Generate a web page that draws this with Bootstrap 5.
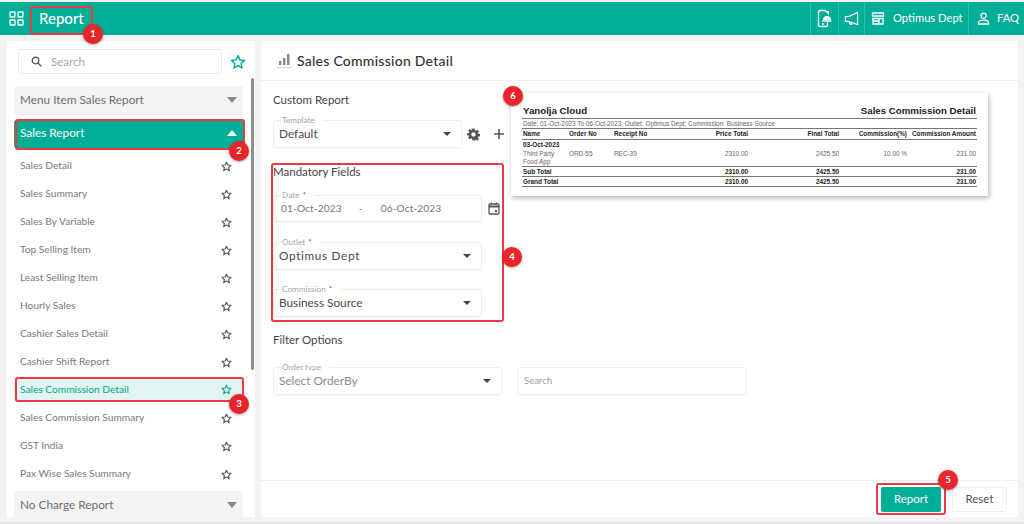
<!DOCTYPE html>
<html lang="en"><head><meta charset="utf-8"><title>Report</title>
<link href="https://cdn.jsdelivr.net/npm/bootstrap@5.3.0/dist/css/bootstrap.min.css" rel="stylesheet">
<style>
html,body{height:524px;overflow:hidden}
body{background:#f3f3f3;font-family:"Lato","Open Sans",sans-serif;color:#3c4043;position:relative}
.topbar{height:33px;margin-top:2px;background:#00ae98;color:#fff}
.topcell{height:100%;display:flex;align-items:center;border-left:1px solid #2fc0ad;gap:8px;font-size:11.2px;padding:0 0 0 6px;white-space:nowrap;flex:none}
.cell-a{width:28px}
.cell-b{width:26px;padding-left:5px}
.cell-c{width:104px}
.cell-d{width:56px;padding-left:8px;gap:7px}
.gridico{margin-left:9px}
.apptitle{font-size:15px;font-weight:500;margin-left:15px}
.shell{height:483px;padding:6px 6px 0 7px;gap:6px}
.sidepane{width:248px;height:476px;background:#fff;position:relative;overflow:hidden;flex:none}
.mainpane{flex:1;height:476px;background:#fff;display:flex;flex-direction:column}
.searchbox{width:204px;height:25px;margin-left:11px;border:1px solid #eaeaea;border-radius:3px;font-size:11.5px;color:#a8a8a8;padding-left:12px;gap:9px}
.searchrow{margin-top:8px;gap:8px}
.acc{width:229px;margin-left:7px;height:29px;border-radius:3px;background:#f3f3f3;color:#6f6f6f;font-size:11.8px;padding:0 6px 2px}
.acc.open{background:#00ae98;color:#fff;margin-top:5px;height:28px}
.firstacc{margin-top:12px}
.caret-d{width:0;height:0;border-left:5.5px solid transparent;border-right:5.5px solid transparent;border-top:6px solid #8a8a8a}
.caret-u{width:0;height:0;border-left:5.5px solid transparent;border-right:5.5px solid transparent;border-bottom:6px solid #fff}
.itemrow{width:229px;margin-left:7px;height:28px;font-size:10.2px;color:#7a7a7a;padding:0 11px 0 6px}
.itemrow.sel{background:#e0f4f1;color:#00a894;height:25px;margin:1px 0 2px 7px}
.itemlist{margin-top:4px;margin-bottom:3px}
.stro{fill:none;stroke:#555;stroke-width:2.4;stroke-linejoin:round}
.itemrow.sel .stro{stroke:#00a894}
.scrolly{position:absolute;left:244px;top:37px;width:3px;height:292px;background:#8f8f8f;border-radius:2px}
.mainhead{height:40px;border-bottom:1px solid #eee;font-size:14px;font-weight:500;color:#333;padding-left:15px;gap:4px;flex:none;letter-spacing:.25px}
.mainbody{flex:1;padding-left:12px;position:relative;overflow:hidden}
.sect{font-size:11.5px;color:#444;line-height:14px}
.fld{border:1px solid #eee;border-radius:3px;position:relative;font-size:11.8px;color:#4a4a4a;padding:0 5px;display:flex;align-items:center;justify-content:space-between;box-shadow:0 1px 1px rgba(0,0,0,.03)}
.fldlabel{position:absolute;left:7px;top:-6px;background:#fff;padding:0 8px 0 1px;font-size:8.2px;line-height:10px;color:#a5a5a5}
.req{color:#e33;margin-left:3px}
.ctr{width:0;height:0;border-left:4px solid transparent;border-right:4px solid transparent;border-top:4px solid #444;margin-right:5px}
.tplrow{margin-top:13px;width:240px;gap:5px}
.tplfld{width:189px;height:28px}
.sect-mand{margin-top:17px}
.datefld{width:209px;height:27px;color:#777;padding:0 0 0 7px;justify-content:flex-start;font-size:10.2px;letter-spacing:.1px}
.daterow{margin-top:16px;width:228px;gap:6px}
.dash{margin:0 18px 0 17px}
.sel209{width:209px;height:28px;margin-top:20px}
.sel209b{margin-top:19px}
.spaced{letter-spacing:.65px}
.sect-filt{margin-top:16px}
.filtrow{margin-top:20px;gap:15px}
.ordfld{width:229px;height:28px;color:#8a8a8a;padding-bottom:1px}
.srchfld{width:230px;height:28px;font-size:9.5px;color:#a0a0a0;padding:0 6px}
.bodypad{padding-top:12px}
.plusico{margin-left:8px}
.mainfoot{height:37px;border-top:1px solid #eee;padding-right:11px;gap:11px;flex:none}
.btn-go,.btn-go:hover{background:#00ae98;color:#fff;font-size:11.5px;width:60px;height:25px;padding:0;border:0;border-radius:2px}
.btn-rs{background:#fff;color:#555;font-size:11.5px;width:55px;height:25px;padding:0;border:1px solid #eee;border-radius:2px}
.repwrap{position:absolute;left:250px;top:12px;width:477px;height:103px;background:#fff;box-shadow:1px 2px 5px rgba(0,0,0,.3);padding:12px 11px 0;font-family:"Liberation Sans",Arial,sans-serif}
.rephead{font-weight:700;font-size:9.7px;color:#222;line-height:12px;padding:0 1px 1px;border-bottom:1px solid #777}
.repsub{font-size:6.4px;color:#666;line-height:9px;padding:0 1px;border-bottom:1px solid #777}
.reptab{width:455px;table-layout:fixed;border-collapse:collapse;font-size:6.4px;color:#666;line-height:7.5px}
.reptab td,.reptab th{padding:0 1px;vertical-align:middle;white-space:nowrap}
.reptab td.wrp{white-space:normal}
.reptab th,.reptab .bd{color:#222;font-weight:700}
.r1 th{height:10px;border-bottom:1px solid #777}
.r2 td{height:10px}
.r3 td{padding-bottom:1px;padding-top:1px;vertical-align:top}
.r4 td{height:10px;border-top:1px solid #777}
.r5 td{height:10px;border-top:1px solid #777;border-bottom:1px solid #777}
.rt{text-align:right}
.mark-box{position:absolute;border:2px solid #ec3a44;border-radius:3px;pointer-events:none}
.mark-num{position:absolute;width:20px;height:20px;border-radius:50%;background:#e7262c;color:#fff;font-size:9.5px;font-weight:700;display:flex;align-items:center;justify-content:center;box-shadow:0 1px 3px rgba(0,0,0,.35)}
.b1{left:30px;top:6px;width:63px;height:29px}.n1{left:83px;top:24px}
.b2{left:15px;top:119px;width:230px;height:31px}.n2{left:229px;top:141px}
.b3{left:15px;top:377px;width:229px;height:25px}.n3{left:229px;top:394px}
.b4{left:271px;top:163px;width:233px;height:159px}.n4{left:502px;top:247px}
.b5{left:876px;top:483px;width:70px;height:32px}.n5{left:938px;top:470px}
.n6{left:503px;top:86px}
.basestrip{position:absolute;left:0;right:0;bottom:0;height:2px;background:#e4e4e4}
</style></head><body>
<svg width="0" height="0" class="position-absolute"><defs><symbol id="star" viewBox="0 0 24 24"><path class="stro" d="M12 2.500l2.900 6.300 6.900.8-5.100 4.700 1.400 6.800L12 17.200l-6.100 3.900 1.400-6.800L2.200 9.600l6.900-.8z"/></symbol></defs></svg>
<div class="topbar d-flex align-items-center">
  <svg class="gridico" width="15" height="15" viewBox="0 0 15 15" fill="none" stroke="#fff" stroke-width="1.3"><rect x="1" y="1" width="5" height="5" rx=".6"/><rect x="9" y="1" width="5" height="5" rx=".6"/><rect x="1" y="9" width="5" height="5" rx=".6"/><rect x="9" y="9" width="5" height="5" rx=".6"/></svg>
  <div class="apptitle flex-grow-1">Report</div>
  <div class="topcell cell-a"><svg width="15" height="19" viewBox="0 0 15 19" fill="none" stroke="#fff" stroke-width="1.4"><path d="M9 1.500H3a1.500 1.500 0 0 0-1.500 1.500v13A1.500 1.500 0 0 0 3 17.500h6a1.500 1.500 0 0 0 1.500-1.500v-3"/><path d="M5 15h2"/><path d="M6 11a4 4 0 0 1 8 0z" fill="#fff" stroke="none"/><path d="M5 12h9.500"/><path d="M8 2h4v4z" fill="#fff" stroke="none"/></svg></div>
  <div class="topcell cell-b"><svg width="15" height="15" viewBox="0 0 16 15" fill="none" stroke="#fff" stroke-width="1.2"><path d="M14.500 1v13L5 10.500H1.500v-5H5z"/><path d="M5 10.500l1.500 3h2l-1-2.400"/></svg></div>
  <div class="topcell cell-c"><svg width="14" height="13" viewBox="0 0 14 13" fill="none" stroke="#fff" stroke-width="1.3"><path d="M1.500 1h11v3h-11zM1 6.500h12M2 6.500V12h10V6.500M2 9h6M8 6.500V12"/></svg><span>Optimus Dept</span></div>
  <div class="topcell cell-d"><svg width="13" height="13" viewBox="0 0 13 13" fill="none" stroke="#fff" stroke-width="1.3"><circle cx="6.500" cy="3.800" r="2.600"/><path d="M1.500 12v-1.200c0-1.600 2-2.600 5-2.600s5 1 5 2.600V12z"/></svg><span>FAQ</span></div>
</div>
<div class="shell d-flex">
  <aside class="sidepane">
    <div class="searchrow d-flex align-items-center">
      <div class="searchbox d-flex align-items-center"><svg width="11" height="11" viewBox="0 0 11 11" fill="none" stroke="#555" stroke-width="1.3"><circle cx="4.500" cy="4.500" r="3.300"/><path d="M7 7l3.200 3.200"/></svg><span>Search</span></div>
      <svg width="16" height="16" viewBox="0 0 24 24" fill="none" stroke="#00ae98" stroke-width="2.2" stroke-linejoin="round"><path d="M12 2.500l2.900 6.300 6.900.8-5.100 4.700 1.400 6.800L12 17.200l-6.100 3.900 1.400-6.800L2.200 9.600l6.900-.8z"/></svg>
    </div>
    <div class="acc firstacc d-flex align-items-center justify-content-between"><span>Menu Item Sales Report</span><i class="caret-d"></i></div>
    <div class="acc open d-flex align-items-center justify-content-between"><span>Sales Report</span><i class="caret-u"></i></div>
    <div class="itemlist">
      <div class="itemrow d-flex align-items-center justify-content-between"><span>Sales Detail</span><svg width="11" height="11"><use href="#star"/></svg></div>
      <div class="itemrow d-flex align-items-center justify-content-between"><span>Sales Summary</span><svg width="11" height="11"><use href="#star"/></svg></div>
      <div class="itemrow d-flex align-items-center justify-content-between"><span>Sales By Variable</span><svg width="11" height="11"><use href="#star"/></svg></div>
      <div class="itemrow d-flex align-items-center justify-content-between"><span>Top Selling Item</span><svg width="11" height="11"><use href="#star"/></svg></div>
      <div class="itemrow d-flex align-items-center justify-content-between"><span>Least Selling Item</span><svg width="11" height="11"><use href="#star"/></svg></div>
      <div class="itemrow d-flex align-items-center justify-content-between"><span>Hourly Sales</span><svg width="11" height="11"><use href="#star"/></svg></div>
      <div class="itemrow d-flex align-items-center justify-content-between"><span>Cashier Sales Detail</span><svg width="11" height="11"><use href="#star"/></svg></div>
      <div class="itemrow d-flex align-items-center justify-content-between"><span>Cashier Shift Report</span><svg width="11" height="11"><use href="#star"/></svg></div>
      <div class="itemrow sel d-flex align-items-center justify-content-between"><span>Sales Commission Detail</span><svg width="11" height="11" viewBox="0 0 24 24"><path class="stro" d="M12 2.500l2.900 6.300 6.900.8-5.100 4.700 1.400 6.800L12 17.200l-6.100 3.900 1.400-6.800L2.200 9.600l6.900-.8z"/></svg></div>
      <div class="itemrow d-flex align-items-center justify-content-between"><span>Sales Commission Summary</span><svg width="11" height="11"><use href="#star"/></svg></div>
      <div class="itemrow d-flex align-items-center justify-content-between"><span>GST India</span><svg width="11" height="11"><use href="#star"/></svg></div>
      <div class="itemrow d-flex align-items-center justify-content-between"><span>Pax Wise Sales Summary</span><svg width="11" height="11"><use href="#star"/></svg></div>
    </div>
    <div class="acc d-flex align-items-center justify-content-between"><span>No Charge Report</span><i class="caret-d"></i></div>
    <div class="scrolly"></div>
  </aside>
  <main class="mainpane">
    <div class="mainhead d-flex align-items-center">
      <svg width="17" height="17" viewBox="0 0 17 17" fill="#8a8a8a"><rect x="3" y="9" width="2.500" height="4"/><rect x="7" y="6" width="2.500" height="7"/><rect x="11" y="2" width="2.500" height="11"/><rect x="1" y="15" width="15" height=".8" fill="#ccc"/></svg>
      <span>Sales Commission Detail</span>
    </div>
    <div class="mainbody bodypad">
      <div class="sect">Custom Report</div>
      <div class="tplrow d-flex align-items-center">
        <div class="fld tplfld"><span class="fldlabel">Template</span><span>Default</span><i class="ctr"></i></div>
        <svg width="13" height="13" viewBox="0 0 24 24" fill="#555"><path fill-rule="evenodd" d="M10 1h4l.6 3.200 2 .8 2.700-1.800 2.800 2.800-1.800 2.700.8 2 3.200.6v4l-3.200.6-.8 2 1.800 2.700-2.800 2.800-2.700-1.800-2 .8L14 23h-4l-.6-3.200-2-.8-2.700 1.800-2.800-2.800 1.800-2.700-.8-2L0 14v-4l3.200-.6.8-2L2.200 4.700 5 1.900l2.700 1.800 2-.8zM12 8a4 4 0 1 0 0 8 4 4 0 0 0 0-8z"/></svg>
        <svg class="plusico" width="12" height="12" viewBox="0 0 12 12" stroke="#555" stroke-width="1.6"><path d="M6 1v10M1 6h10"/></svg>
      </div>
      <div class="sect sect-mand">Mandatory Fields</div>
      <div class="daterow d-flex align-items-center">
        <div class="fld datefld"><span class="fldlabel">Date<span class="req">*</span></span><span>01-Oct-2023</span><span class="dash">-</span><span>06-Oct-2023</span></div>
        <svg width="12" height="13" viewBox="0 0 12 13" fill="none" stroke="#555" stroke-width="1.3"><rect x="1" y="2" width="10" height="10" rx="1"/><path d="M1 4.500h10" stroke-width="2"/><path d="M3.500 .5v2M8.500 .5v2"/><rect x="7" y="8" width="2" height="2" fill="#555" stroke="none"/></svg>
      </div>
      <div class="fld sel209"><span class="fldlabel">Outlet<span class="req">*</span></span><span class="spaced">Optimus Dept</span><i class="ctr"></i></div>
      <div class="fld sel209 sel209b"><span class="fldlabel">Commission<span class="req">*</span></span><span>Business Source</span><i class="ctr"></i></div>
      <div class="sect sect-filt">Filter Options</div>
      <div class="filtrow d-flex">
        <div class="fld ordfld"><span class="fldlabel">Order type</span><span>Select OrderBy</span><i class="ctr"></i></div>
        <div class="fld srchfld"><span>Search</span></div>
      </div>
      <div class="repwrap">
        <div class="rephead d-flex justify-content-between"><span>Yanolja Cloud</span><span>Sales Commission Detail</span></div>
        <div class="repsub">Date: 01-Oct-2023 To 06-Oct-2023; Outlet: Optimus Dept; Commission: Business Source</div>
        <table class="reptab">
          <colgroup><col style="width:46px"><col style="width:45px"><col style="width:45px"><col style="width:91px"><col style="width:91px"><col style="width:68px"><col style="width:69px"></colgroup>
          <tr class="r1"><th>Name</th><th>Order No</th><th>Receipt No</th><th class="rt">Price Total</th><th class="rt">Final Total</th><th class="rt">Commission(%)</th><th class="rt">Commission Amount</th></tr>
          <tr class="r2"><td class="bd" colspan="7">03-Oct-2023</td></tr>
          <tr class="r3"><td class="wrp">Third Party Food App</td><td>ORD-55</td><td>REC-39</td><td class="rt">2310.00</td><td class="rt">2425.50</td><td class="rt">10.00 %</td><td class="rt">231.00</td></tr>
          <tr class="r4"><td class="bd" colspan="3">Sub Total</td><td class="rt bd">2310.00</td><td class="rt bd">2425.50</td><td></td><td class="rt bd">231.00</td></tr>
          <tr class="r5"><td class="bd" colspan="3">Grand Total</td><td class="rt bd">2310.00</td><td class="rt bd">2425.50</td><td></td><td class="rt bd">231.00</td></tr>
        </table>
      </div>
    </div>
    <div class="mainfoot d-flex align-items-center justify-content-end">
      <button class="btn btn-go">Report</button><button class="btn btn-rs">Reset</button>
    </div>
  </main>
</div>
<div class="basestrip"></div>
<div class="mark-box b1"></div><div class="mark-num n1">1</div>
<div class="mark-box b2"></div><div class="mark-num n2">2</div>
<div class="mark-box b3"></div><div class="mark-num n3">3</div>
<div class="mark-box b4"></div><div class="mark-num n4">4</div>
<div class="mark-box b5"></div><div class="mark-num n5">5</div>
<div class="mark-num n6">6</div>
</body></html>
